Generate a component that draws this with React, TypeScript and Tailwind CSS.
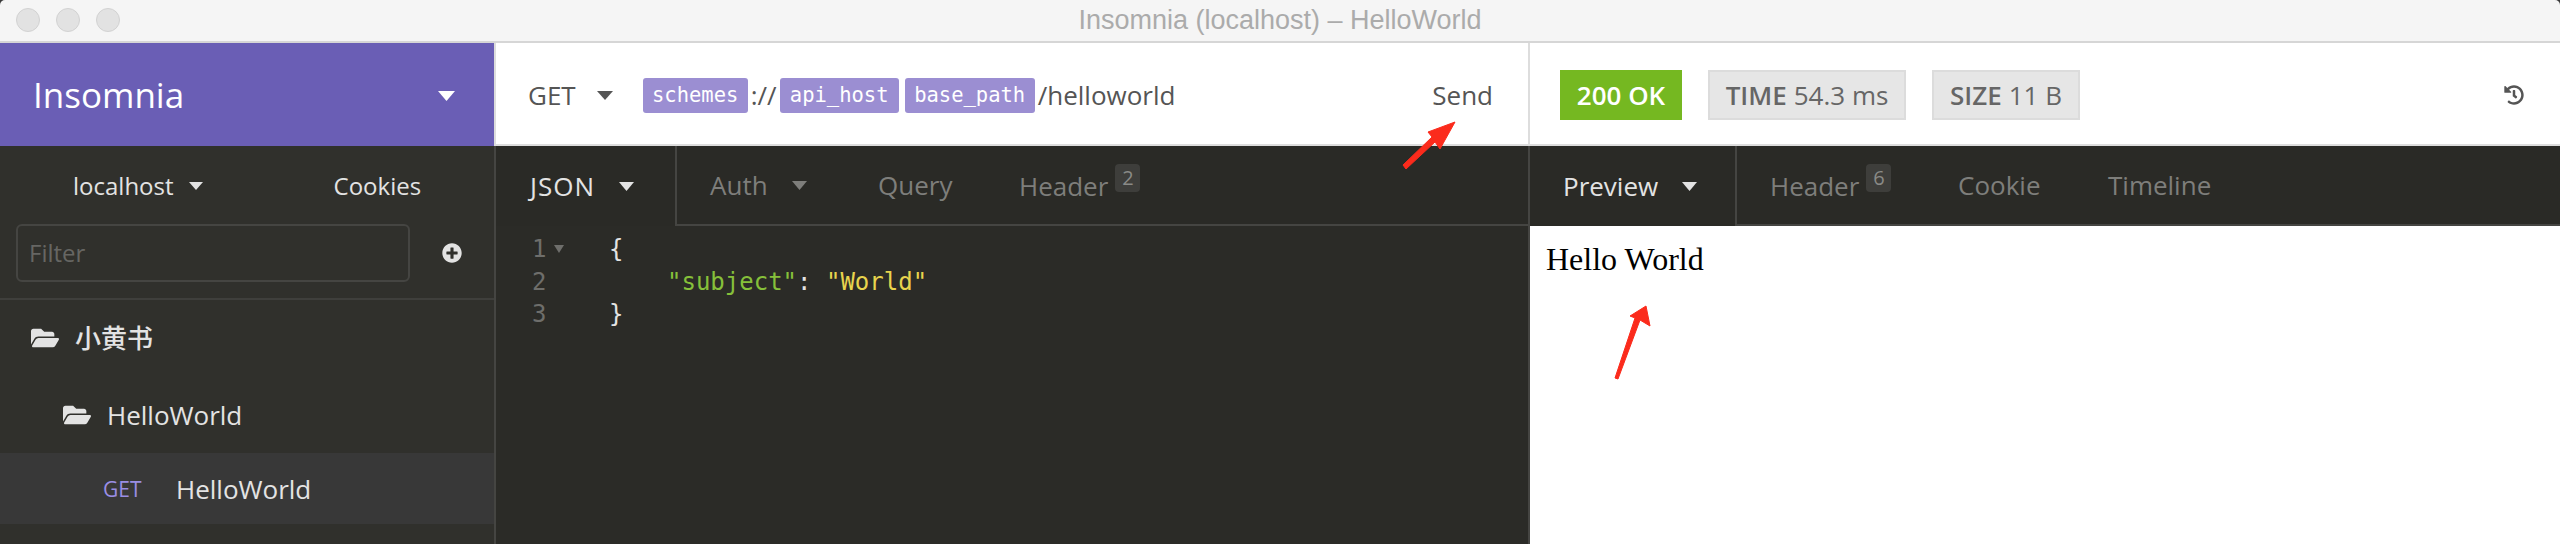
import React from "react";
import { FaFolderOpen, FaPlusCircle, FaHistory } from "react-icons/fa";

const Caret = ({ className = "", w = 16, h = 9 }: { className?: string; w?: number; h?: number }) => (
  <svg width={w} height={h} viewBox="0 0 16 9" preserveAspectRatio="none" className={`shrink-0 fill-current ${className}`}>
    <polygon points="0,0 16,0 8,9" />
  </svg>
);

const Chip = ({ children, className = "" }: { children: string; className?: string }) => (
  <span className={`flex h-[35px] items-center justify-center rounded-[3px] bg-[#9b8ed2] font-['DejaVu_Sans_Mono',monospace] text-[20.5px] text-white ${className}`}>
    {children}
  </span>
);

const Badge = ({ children }: { children: string }) => (
  <span className="ml-[7px] mt-[18px] flex h-[28px] w-[25px] items-center justify-center rounded-[4px] bg-[#3e3e3b] text-[20px] leading-none text-[#8a8a87]">
    {children}
  </span>
);

const Stat = ({ label, value, className = "" }: { label: string; value: string; className?: string }) => (
  <span className={`flex h-[50px] items-center justify-center gap-[7px] border-2 border-[#dcdcdc] bg-[#e6e6e6] text-[26px] text-[#666] ${className}`}>
    <b className="font-semibold">{label}</b>
    <span>{value}</span>
  </span>
);

const Arrow = ({ className, points, w, h }: { className: string; points: string; w: number; h: number }) => (
  <svg width={w} height={h} viewBox={`0 0 ${w} ${h}`} className={`pointer-events-none absolute fill-[#fb2b1c] ${className}`}>
    <polygon points={points} strokeLinejoin="round" className="stroke-[#fb2b1c]" strokeWidth="1" />
  </svg>
);

export default function App() {
  return (
    <div className="relative flex h-[544px] w-[2560px] flex-col overflow-hidden bg-[#3a3a3a] font-['Open_Sans','Noto_Sans_CJK_SC',sans-serif]">
      <div className="relative flex h-[43px] shrink-0 items-center justify-center rounded-t-[5px] border-b-2 border-[#d6d6d6] bg-[#f5f5f5]">
        <div className="absolute left-[16px] top-[8px] flex gap-[16px]">
          <span className="h-[24px] w-[24px] rounded-full border border-[#d2d2d2] bg-[#e2e2e2]" />
          <span className="h-[24px] w-[24px] rounded-full border border-[#d2d2d2] bg-[#e2e2e2]" />
          <span className="h-[24px] w-[24px] rounded-full border border-[#d2d2d2] bg-[#e2e2e2]" />
        </div>
        <span className="font-['Liberation_Sans',sans-serif] text-[27px] leading-none text-[#ababab]">Insomnia (localhost) – HelloWorld</span>
      </div>

      <div className="flex min-h-0 flex-1">
        {/* Sidebar */}
        <div className="flex w-[496px] shrink-0 flex-col">
          <div className="flex h-[103px] items-center justify-between border-r-2 border-[#dddddd] bg-[#6a5eb5] pl-[33px] pr-[39px] text-white">
            <span className="text-[35px] font-medium leading-none">Insomnia</span>
            <Caret w={17} h={10} className="mt-[3px]" />
          </div>
          <div className="flex flex-1 flex-col border-r-2 border-[#454542] bg-[#30302c] font-medium text-[#e3e3e3]">
            <div className="flex h-[78px] items-center pl-[73px] pt-[2px] text-[24px]">
              <span>localhost</span>
              <Caret w={14} h={8} className="ml-[15px]" />
              <span className="ml-[131px]">Cookies</span>
            </div>
            <div className="flex items-center pl-[16px]">
              <div className="flex h-[58px] w-[394px] items-center rounded-[6px] border-2 border-[#454542] pl-[11px] text-[24px] font-normal text-[#666663]">Filter</div>
              <FaPlusCircle className="ml-[32px] text-[20px] text-[#e3e3e3]" />
            </div>
            <div className="mt-[16px] h-[78px] shrink-0 border-t-2 border-[#3f3f3c] pl-[31px]">
              <div className="flex h-full items-center gap-[16px] text-[26px]">
                <FaFolderOpen className="text-[28px]" />
                <span>小黄书</span>
              </div>
            </div>
            <div className="flex h-[77px] items-center gap-[16px] pl-[63px] text-[26px]">
              <FaFolderOpen className="text-[28px]" />
              <span className="mt-[2px]">HelloWorld</span>
            </div>
            <div className="flex h-[71px] items-center bg-[#383838] pl-[103px] text-[26px]">
              <span className="mt-[2px] w-[73px] text-[21px] font-medium text-[#9a8ee4]">GET</span>
              <span className="mt-[2px]">HelloWorld</span>
            </div>
          </div>
        </div>

        {/* Request pane */}
        <div className="flex w-[1034px] shrink-0 flex-col">
          <div className="flex h-[103px] items-center border-b-2 border-r-2 border-[#dddddd] bg-white pt-[3px] text-[26px] text-[#555]">
            <span className="ml-[32px]">GET</span>
            <Caret className="ml-[21px] text-[#555]" />
            <Chip className="ml-[30px] w-[105px]">schemes</Chip>
            <span className="ml-[3px] w-[29px]">://</span>
            <Chip className="w-[119px]">api_host</Chip>
            <Chip className="ml-[6px] w-[130px]">base_path</Chip>
            <span className="ml-[3px]">/helloworld</span>
            <span className="ml-auto mr-[35px]">Send</span>
          </div>
          <div className="flex h-[80px] border-r-2 border-[#454542] bg-[#2a2a26] text-[26px] text-[#7e7e7b]">
            <div className="flex w-[181px] items-center border-r-2 border-[#454542] pl-[34px] text-[#e3e3e3]">
              <span className="tracking-[1px]">JSON</span>
              <Caret w={15} h={9} className="ml-[24px]" />
            </div>
            <div className="flex w-[167px] items-center border-b-2 border-[#454542] pl-[33px]">
              <span>Auth</span>
              <Caret w={15} h={9} className="ml-[24px]" />
            </div>
            <div className="flex w-[141px] items-center border-b-2 border-[#454542] pl-[34px]">Query</div>
            <div className="flex w-[186px] items-start border-b-2 border-[#454542] pl-[34px]">
              <span className="mt-[21px]">Header</span>
              <Badge>2</Badge>
            </div>
            <div className="flex-1 border-b-2 border-[#454542]" />
          </div>
          <div className="flex-1 border-r-2 border-[#454542] bg-[#2b2b27] pt-[7px] font-['DejaVu_Sans_Mono',monospace] text-[24px] leading-[32.5px]">
            <div className="flex pl-[36px]">
              <div className="w-[77px] text-[#6e6e6b]">
                <div className="flex items-center">1<Caret w={10} h={8} className="ml-[8px] text-[#6e6e6b]" /></div>
                <div>2</div>
                <div>3</div>
              </div>
              <div className="text-[#e3e3e3]">
                <div>{"{"}</div>
                <div className="pl-[58px]">
                  <span className="text-[#86c03a]">"subject"</span>: <span className="text-[#e8d44d]">"World"</span>
                </div>
                <div>{"}"}</div>
              </div>
            </div>
          </div>
        </div>

        {/* Response pane */}
        <div className="flex min-w-0 flex-1 flex-col">
          <div className="flex h-[103px] items-center border-b-2 border-[#dddddd] bg-white pl-[30px] pr-[36px] pt-[3px]">
            <span className="flex h-[50px] w-[122px] items-center justify-center bg-[#75b821] text-[26px] font-semibold text-white">200 OK</span>
            <Stat label="TIME" value="54.3 ms" className="ml-[26px] w-[198px]" />
            <Stat label="SIZE" value="11 B" className="ml-[26px] w-[148px]" />
            <FaHistory className="ml-auto text-[20px] text-[#555]" />
          </div>
          <div className="flex h-[80px] bg-[#2a2a26] text-[26px] text-[#7e7e7b]">
            <div className="flex w-[207px] items-center border-r-2 border-[#454542] pl-[33px] text-[#e3e3e3]">
              <span>Preview</span>
              <Caret w={15} h={9} className="ml-[24px]" />
            </div>
            <div className="flex w-[188px] items-start border-b-2 border-[#454542] pl-[33px]">
              <span className="mt-[21px]">Header</span>
              <Badge>6</Badge>
            </div>
            <div className="flex w-[150px] items-center border-b-2 border-[#454542] pl-[33px]">Cookie</div>
            <div className="flex flex-1 items-center border-b-2 border-[#454542] pl-[33px]">Timeline</div>
          </div>
          <div className="flex-1 bg-white pl-[16px] pt-[14px] font-['Liberation_Serif',serif] text-[32px] leading-[38px] text-black">Hello World</div>
        </div>
      </div>

      <Arrow className="left-[1400px] top-[118px]" w={60} h={54} points="3,47 6,51 35,24 40,31 55,4 28,14 32,19" />
      <Arrow className="left-[1610px] top-[300px]" w={46} h={84} points="5,78 8,79 30,20 40,26 36,6 20,16 25,18" />
    </div>
  );
}
